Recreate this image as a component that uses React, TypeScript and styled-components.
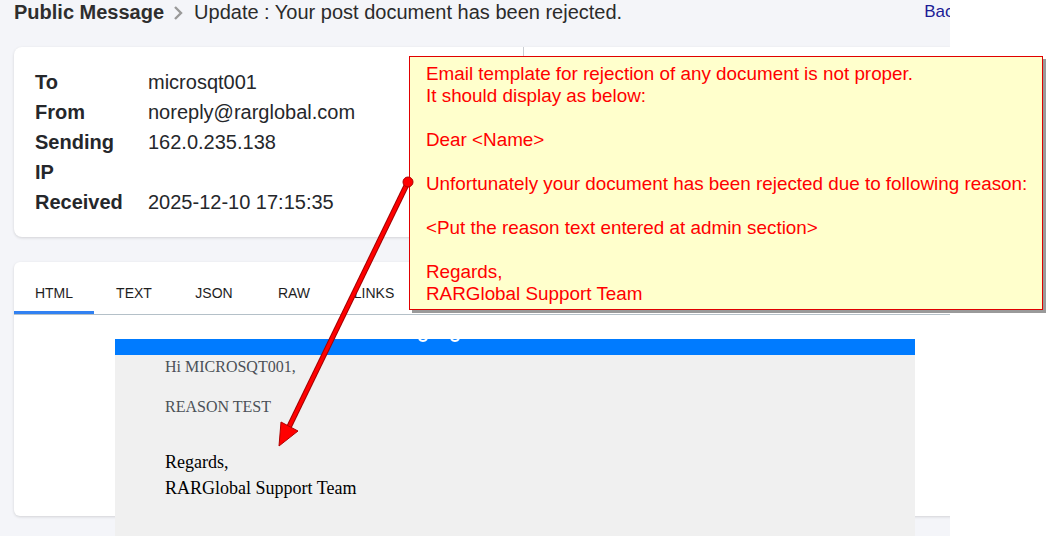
import styled, { createGlobalStyle } from 'styled-components';

const GlobalStyle = createGlobalStyle`
  html, body {
    margin: 0;
    padding: 0;
    background: #ffffff;
  }
  body {
    font-family: "Liberation Sans", Arial, sans-serif;
  }
`;

const details = [
  { label: 'To', value: 'microsqt001' },
  { label: 'From', value: 'noreply@rarglobal.com' },
  { label: 'Sending IP', value: '162.0.235.138' },
  { label: 'Received', value: '2025-12-10 17:15:35' },
];

const tabs = ['HTML', 'TEXT', 'JSON', 'RAW', 'LINKS'];

const App = () => {
  return (
    <>
      <GlobalStyle />
      <Page>
        <Inner>
          <Header>
            <Crumb>Public Message</Crumb>
            <Chevron width="10" height="16" viewBox="0 0 10 16">
              <path d="M2 2l6 6-6 6" fill="none" stroke="#9a9a9a" strokeWidth="2.4" />
            </Chevron>
            <Subject>Update : Your post document has been rejected.</Subject>
            <BackLink>Back</BackLink>
          </Header>

          <InfoCard>
            <InfoList>
              {details.map((d) => (
                <InfoRow key={d.label}>
                  <Label>{d.label}</Label>
                  <Value>{d.value}</Value>
                </InfoRow>
              ))}
            </InfoList>
            <InfoSide />
          </InfoCard>

          <BodyCard>
            <TabList>
              {tabs.map((t, i) => (
                <Tab key={t} $active={i === 0}>
                  {t}
                </Tab>
              ))}
            </TabList>
            <MailFrame>
              <MailBar>
                <BarMarks width="44" height="6" viewBox="0 0 44 6">
                  <path d="M1 0q4 4 8 0" fill="none" stroke="#ffffff" strokeWidth="2" />
                  <path d="M33 0q4 4 8 0" fill="none" stroke="#ffffff" strokeWidth="2" />
                </BarMarks>
              </MailBar>
              <MailBody>
                <MailText>Hi MICROSQT001,</MailText>
                <MailText $gap>REASON TEST</MailText>
                <Signature>
                  Regards,
                  <br />
                  RARGlobal Support Team
                </Signature>
              </MailBody>
            </MailFrame>
          </BodyCard>
        </Inner>
      </Page>

      <Note>
        <NoteGroup>
          Email template for rejection of any document is not proper.
          <br />
          It should display as below:
        </NoteGroup>
        <NoteGroup>Dear &lt;Name&gt;</NoteGroup>
        <NoteGroup>Unfortunately your document has been rejected due to following reason:</NoteGroup>
        <NoteGroup>&lt;Put the reason text entered at admin section&gt;</NoteGroup>
        <NoteGroup>
          Regards,
          <br />
          RARGlobal Support Team
        </NoteGroup>
      </Note>

      <Arrow width="1053" height="536" viewBox="0 0 1053 536">
        <line x1="408" y1="182" x2="289" y2="427" stroke="#a00000" strokeWidth="5.5" />
        <line x1="408" y1="182" x2="289" y2="427" stroke="#ff0000" strokeWidth="3.5" />
        <polygon points="279,446 281,422 298,431" fill="#ff0000" stroke="#b00000" strokeWidth="1" />
        <circle cx="408" cy="182" r="5" fill="#ff0000" stroke="#b00000" strokeWidth="1" />
      </Arrow>
    </>
  );
};

const Page = styled.div`
  width: 950px;
  height: 536px;
  background: #f4f5f9;
  overflow: hidden;
`;

const Inner = styled.div`
  width: 1002px;
  padding: 0 14px;
`;

const Header = styled.div`
  display: flex;
  align-items: flex-start;
  height: 47px;
  font-size: 20px;
  line-height: 24px;
  color: #2b2b2b;
`;

const Crumb = styled.span`
  font-weight: bold;
  color: #2e2e2e;
`;

const Chevron = styled.svg`
  margin: 5px 11px 0 9px;
`;

const Subject = styled.span`
  color: #2b2b2b;
`;

const BackLink = styled.a`
  flex-shrink: 0;
  margin-left: auto;
  margin-right: 54px;
  font-size: 17px;
  color: #1c1c96;
  text-decoration: none;
`;

const InfoCard = styled.div`
  display: flex;
  height: 190px;
  background: #ffffff;
  border-radius: 8px;
  box-shadow: 0 1px 3px rgba(0, 0, 0, 0.14);
`;

const InfoList = styled.div`
  width: 488px;
  padding: 20px 0 0 21px;
`;

const InfoSide = styled.div`
  flex: 1;
  border-left: 1px solid #c9ccd2;
`;

const InfoRow = styled.div`
  display: flex;
  font-size: 20px;
  line-height: 30px;
`;

const Label = styled.div`
  width: 100px;
  margin-right: 13px;
  font-weight: bold;
  color: #25272b;
`;

const Value = styled.div`
  color: #25272b;
`;

const BodyCard = styled.div`
  margin-top: 25px;
  height: 254px;
  background: #ffffff;
  border-radius: 6px;
  box-shadow: 0 1px 3px rgba(0, 0, 0, 0.14);
`;

const TabList = styled.div`
  display: flex;
  border-bottom: 1px solid #b4c0c8;
`;

const Tab = styled.div<{ $active?: boolean }>`
  width: 80px;
  box-sizing: border-box;
  padding: 23px 0 10px;
  text-align: center;
  font-size: 14px;
  line-height: 16px;
  color: #1e1e1e;
  border-bottom: 3px solid ${(p) => (p.$active ? '#3181f2' : 'transparent')};
`;

const MailFrame = styled.div`
  position: relative;
  width: 800px;
  margin: 24px auto 0;
  z-index: 1;
`;

const MailBar = styled.div`
  position: relative;
  height: 16px;
  background: #007bff;
`;

const BarMarks = styled.svg`
  position: absolute;
  left: 303px;
  top: 0;
`;

const MailBody = styled.div`
  height: 200px;
  padding: 0 50px;
  background: #f0f0f0;
  font-family: "Liberation Serif", "Times New Roman", serif;
`;

const MailText = styled.p<{ $gap?: boolean }>`
  margin: ${(p) => (p.$gap ? '16px' : '0')} 0 0;
  font-size: 16px;
  line-height: 24px;
  color: #4b5057;
`;

const Signature = styled.p`
  margin: 30px 0 0;
  font-size: 18px;
  line-height: 26px;
  color: #000000;
`;

const Note = styled.div`
  position: absolute;
  left: 409px;
  top: 56px;
  width: 600px;
  height: 242px;
  padding: 6px 16px 4px 16px;
  background: #ffffcc;
  border: 1px solid #e00000;
  box-shadow: 3px 3px 0 #9a9a9a;
  font-family: "Liberation Sans", Arial, sans-serif;
  font-size: 18.85px;
  line-height: 22px;
  color: #ff0000;
  white-space: nowrap;
  z-index: 2;
`;

const NoteGroup = styled.div`
  & + & {
    margin-top: 22px;
  }
`;

const Arrow = styled.svg`
  position: absolute;
  left: 0;
  top: 0;
  pointer-events: none;
  z-index: 3;
`;

export default App;
